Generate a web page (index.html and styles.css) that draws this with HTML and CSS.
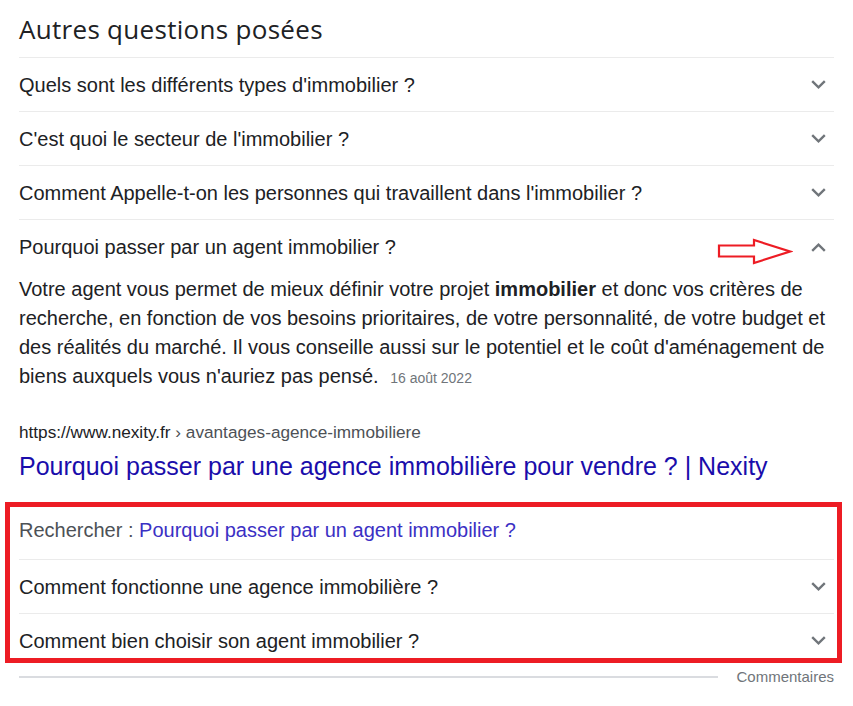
FILE: index.html
```html
<!DOCTYPE html>
<html lang="fr">
<head>
<meta charset="utf-8">
<title>Autres questions posées</title>
<link rel="stylesheet" href="styles.css">
</head>
<body>
<div class="paa">
  <div class="paa-head"><h2 class="paa-title">Autres questions posées</h2></div>

  <div class="q-row"><span class="q-text">Quels sont les différents types d'immobilier ?</span>
    <svg class="chev" width="15" height="9" viewBox="0 0 15 9"><path d="M1.2 1.2 L7.5 7.3 L13.8 1.2" fill="none" stroke="#70757a" stroke-width="2.4"/></svg></div>
  <div class="q-row"><span class="q-text">C'est quoi le secteur de l'immobilier ?</span>
    <svg class="chev" width="15" height="9" viewBox="0 0 15 9"><path d="M1.2 1.2 L7.5 7.3 L13.8 1.2" fill="none" stroke="#70757a" stroke-width="2.4"/></svg></div>
  <div class="q-row"><span class="q-text">Comment Appelle-t-on les personnes qui travaillent dans l'immobilier ?</span>
    <svg class="chev" width="15" height="9" viewBox="0 0 15 9"><path d="M1.2 1.2 L7.5 7.3 L13.8 1.2" fill="none" stroke="#70757a" stroke-width="2.4"/></svg></div>
  <div class="q-row q-open"><span class="q-text">Pourquoi passer par un agent immobilier ?</span>
    <svg class="arrow" width="76" height="28" viewBox="0 0 76 28"><path d="M2 7.5 L37 7.5 L37 2 L73 13.5 L37 25 L37 18.5 L2 18.5 Z" fill="none" stroke="#ed1c24" stroke-width="2.2"/></svg>
    <svg class="chev" width="15" height="9" viewBox="0 0 15 9"><path d="M1.2 7.8 L7.5 1.7 L13.8 7.8" fill="none" stroke="#70757a" stroke-width="2.4"/></svg></div>

  <div class="answer">
    <p class="answer-text">Votre agent vous permet de mieux définir votre projet <b>immobilier</b> et donc vos critères de recherche, en fonction de vos besoins prioritaires, de votre personnalité, de votre budget et des réalités du marché. Il vous conseille aussi sur le potentiel et le coût d'aménagement de biens auxquels vous n'auriez pas pensé. <span class="date">16 août 2022</span></p>
    <div class="cite"><span class="cite-host">https://www.nexity.fr</span><span class="cite-path"> › avantages-agence-immobiliere</span></div>
    <a class="result-link" href="#">Pourquoi passer par une agence immobilière pour vendre ? | Nexity</a>
  </div>

  <div class="related">
    <div class="q-row q-search"><span class="q-text"><span class="search-label">Rechercher : </span><a class="search-link" href="#">Pourquoi passer par un agent immobilier ?</a></span></div>
    <div class="q-row"><span class="q-text">Comment fonctionne une agence immobilière ?</span>
      <svg class="chev" width="15" height="9" viewBox="0 0 15 9"><path d="M1.2 1.2 L7.5 7.3 L13.8 1.2" fill="none" stroke="#70757a" stroke-width="2.4"/></svg></div>
    <div class="q-row"><span class="q-text">Comment bien choisir son agent immobilier ?</span>
      <svg class="chev" width="15" height="9" viewBox="0 0 15 9"><path d="M1.2 1.2 L7.5 7.3 L13.8 1.2" fill="none" stroke="#70757a" stroke-width="2.4"/></svg></div>
    <div class="highlight"></div>
  </div>

  <div class="footer">
    <div class="footer-line"></div>
    <span class="footer-text">Commentaires</span>
  </div>
</div>
</body>
</html>
```

FILE: styles.css
```css
html, body {
  margin: 0;
  padding: 0;
  background: #ffffff;
}
body {
  font-family: "Liberation Sans", Arial, sans-serif;
  color: #202124;
}
.paa {
  width: 815px;
  margin-left: 19px;
}
.paa-head {
  height: 57px;
  box-sizing: border-box;
  padding-top: 11px;
}
.paa-title {
  margin: 0;
  font-family: "Open Sans", sans-serif;
  font-weight: 400;
  font-size: 26px;
  line-height: 36px;
  letter-spacing: 0.3px;
  color: #202124;
}
.q-row {
  position: relative;
  height: 54px;
  box-sizing: border-box;
  border-top: 1px solid #ebebeb;
  display: flex;
  align-items: center;
  justify-content: space-between;
}
.q-search {
  padding-bottom: 5px;
}
.q-text {
  font-size: 20px;
  line-height: 26px;
  color: #202124;
}
.chev {
  display: block;
  margin-right: 8px;
  flex-shrink: 0;
}
.q-open .chev {
  margin-top: 2px;
}
.arrow {
  position: absolute;
  left: 698px;
  top: 18px;
}
.answer {
  padding-top: 2px;
}
.answer-text {
  margin: 0;
  font-size: 20px;
  line-height: 29px;
  color: #202124;
}
.answer-text b {
  font-weight: 700;
}
.date {
  font-size: 14px;
  color: #70757a;
  margin-left: 6px;
}
.cite {
  margin-top: 28px;
  font-size: 17.2px;
  line-height: 22px;
  white-space: nowrap;
}
.cite-host {
  color: #202124;
}
.cite-path {
  color: #4d5156;
}
.result-link {
  display: block;
  margin-top: 8px;
  font-size: 25px;
  line-height: 30px;
  color: #1a0dab;
  text-decoration: none;
}
.related {
  position: relative;
  margin-top: 24px;
}
.search-label {
  color: #4d5156;
}
.search-link {
  color: #3b30c4;
  text-decoration: none;
}
.highlight {
  position: absolute;
  left: -14px;
  right: -8px;
  top: -3px;
  bottom: 4px;
  border: 5px solid #ed1c24;
  pointer-events: none;
}
.footer {
  display: flex;
  align-items: center;
  gap: 18px;
  height: 20px;
}
.footer-line {
  flex: 1;
  height: 2px;
  background: #dadce0;
}
.footer-text {
  font-size: 15px;
  color: #70757a;
  line-height: 20px;
}
```
